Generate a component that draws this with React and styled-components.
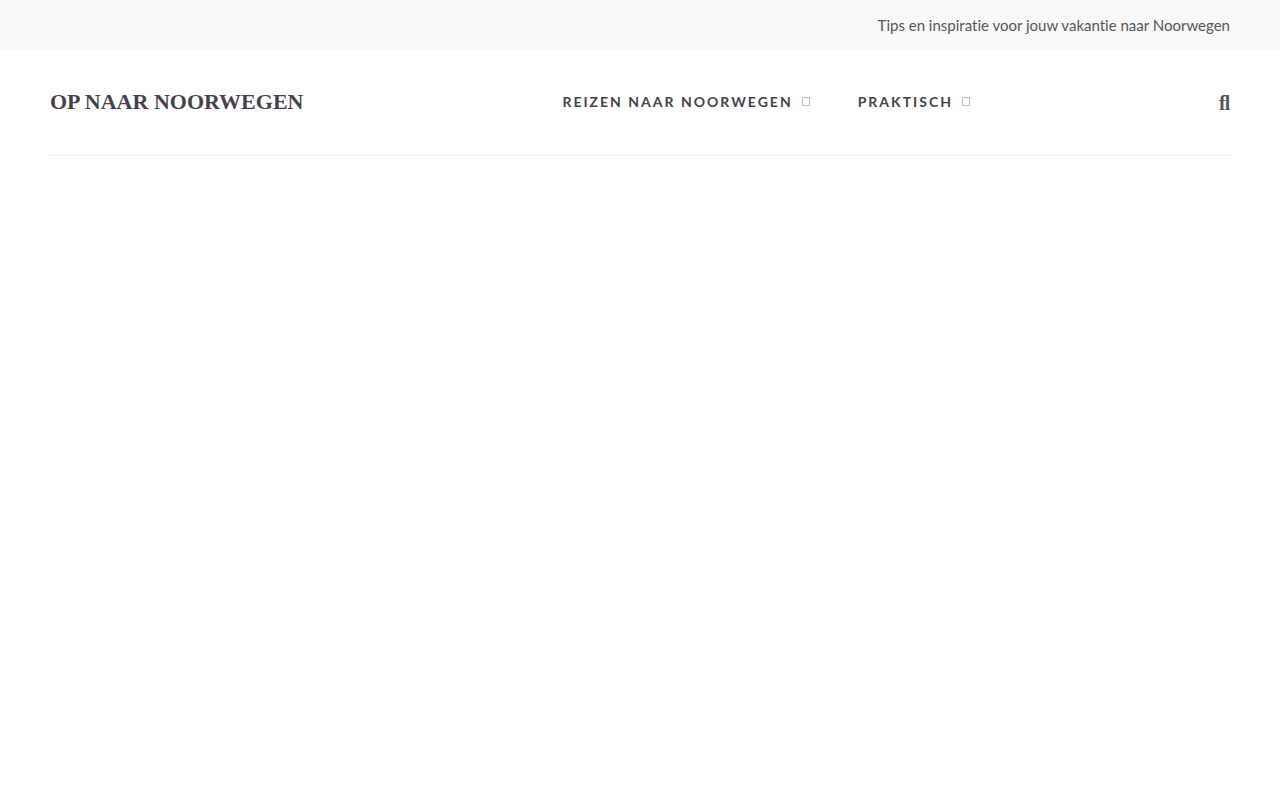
import React from "react";
import styled, { createGlobalStyle } from "styled-components";

const GlobalStyle = createGlobalStyle`
  * { box-sizing: border-box; }
  body {
    margin: 0;
    background: #ffffff;
    color: #54565b;
    font-family: Lato, sans-serif;
    font-size: 16px;
  }
`;

const TopBar = styled.div`
  display: flex;
  align-items: center;
  justify-content: flex-end;
  min-height: 50px;
  padding: 0 50px;
  background: #f9f9f9;
`;

const Tagline = styled.p`
  margin: 0;
  font-size: 15px;
  font-variant-ligatures: none;
  line-height: 24px;
`;

const Header = styled.header`
  display: flex;
  align-items: center;
  justify-content: space-between;
  min-height: 106px;
  margin: 0 50px;
  padding-bottom: 2px;
  border-bottom: 1px solid #eeeeee;
`;

const Logo = styled.a`
  color: #45424d;
  font-family: "Liberation Serif", serif;
  font-size: 22px;
  font-weight: 700;
  line-height: 32px;
  text-decoration: none;
`;

const Menu = styled.nav`
  display: flex;
  gap: 48px;
  margin-left: 10px;
`;

const MenuLink = styled.a`
  display: flex;
  align-items: center;
  gap: 9px;
  color: #45424d;
  font-size: 14px;
  font-weight: 700;
  letter-spacing: 2px;
  line-height: 24px;
  text-decoration: none;
`;

const Marker = styled.span`
  width: 8px;
  height: 9px;
  border: 1px solid #bdbdc0;
`;

const SearchButton = styled.button`
  padding: 2px 0 0;
  border: 0;
  background: none;
  color: #54565b;
  font-family: "Liberation Serif", serif;
  font-size: 20px;
  font-weight: 700;
  line-height: 24px;
  cursor: pointer;
`;

const menuItems = ["REIZEN NAAR NOORWEGEN", "PRAKTISCH"];

export default function App() {
  return (
    <>
      <GlobalStyle />
      <TopBar>
        <Tagline>Tips en inspiratie voor jouw vakantie naar Noorwegen</Tagline>
      </TopBar>
      <Header>
        <Logo href="#">OP NAAR NOORWEGEN</Logo>
        <Menu>
          {menuItems.map((item) => (
            <MenuLink href="#" key={item}>
              {item}
              <Marker aria-hidden="true" />
            </MenuLink>
          ))}
        </Menu>
        <SearchButton type="button">ﬂ</SearchButton>
      </Header>
    </>
  );
}
